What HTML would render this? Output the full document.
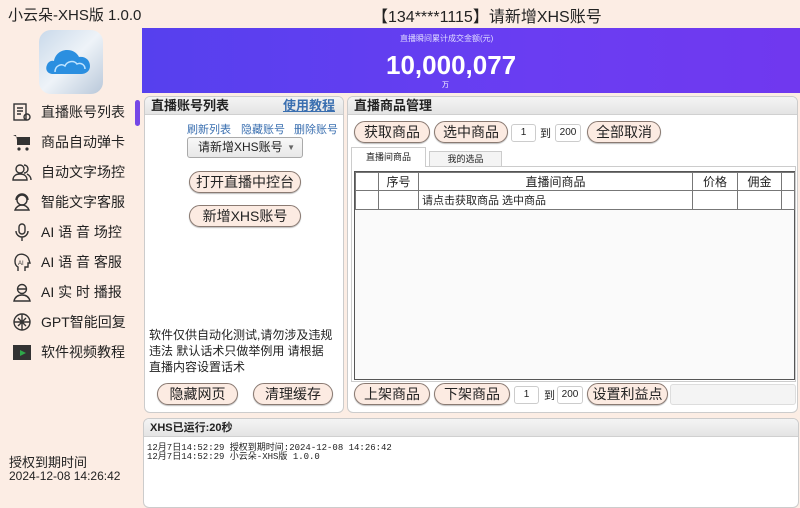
<!DOCTYPE html>
<html><head><meta charset="utf-8"><style>
*{box-sizing:border-box;margin:0;padding:0}
body{width:800px;height:502px;overflow:hidden;background:#fcede4;font-family:"Liberation Sans","Noto Sans CJK SC",sans-serif;color:#222;position:relative}
.a{position:absolute}
.title{left:8px;top:4px;font-size:15px;color:#222}
.menu{left:12px;font-size:14px;color:#222;display:flex;align-items:center}
.menu svg{width:20px;height:20px;margin-right:9px}
.panel{background:#fff;border:1px solid #ccc;border-radius:6px;overflow:hidden}
.ph{height:18px;background:linear-gradient(#f4f4f4,#e4e4e4);border-bottom:1px solid #d0d0d0;font-size:13px;font-weight:bold;padding-left:6px;line-height:18px}
.btn{position:absolute;background:#fcebe2;border:1px solid #8a7a72;border-radius:12px;font-size:14px;text-align:center;color:#222;box-shadow:0 1px 1px #bbb}
.inp{position:absolute;background:#fff;border:1px solid #ccc;border-radius:3px;font-size:10px;text-align:center;line-height:16px;height:18px}
.lnk{font-size:11px;color:#3a6fb0}
td{border:1px solid #777;font-size:12px}
</style></head><body>
<div class="a title">小云朵-XHS版 1.0.0</div>
<div class="a" style="left:372px;top:3px;font-size:16px">【134****1115】请新增XHS账号</div>
<div class="a" style="left:39px;top:30px;width:64px;height:64px;border-radius:12px;background:linear-gradient(135deg,#c9d9ea,#eef3f8 50%,#b9c8da)">
<svg width="64" height="64" viewBox="0 0 64 64"><path d="M14 44c-6 0-8-5-6-9 1-3 4-5 7-4 1-6 6-11 13-11 6 0 10 3 12 7 6-1 11 3 11 9 0 5-4 8-9 8z" fill="#2b8fe0"/><path d="M16 42c0-6 6-9 10-6 2-5 9-6 12-2 4-2 8 1 8 5" stroke="#bfe3ff" stroke-width="1.5" fill="none"/></svg></div>
<div class="a" style="left:135px;top:100px;width:5px;height:26px;background:#7447e6;border-radius:3px"></div>
<div class="a menu" style="top:102px"><svg viewBox="0 0 20 20" fill="none" stroke="#333" stroke-width="1.4"><rect x="2" y="2" width="12" height="16"/><path d="M5 6h6M5 9h6M5 12h4"/><circle cx="15" cy="15" r="3"/></svg>直播账号列表</div>
<div class="a menu" style="top:132px"><svg viewBox="0 0 20 20"><path d="M1 3h3l2 10h11l1-8H5" fill="#333"/><rect x="5" y="5" width="13" height="8" fill="#333"/><circle cx="7" cy="17" r="1.6" fill="#333"/><circle cx="15" cy="17" r="1.6" fill="#333"/></svg>商品自动弹卡</div>
<div class="a menu" style="top:162px"><svg viewBox="0 0 20 20" fill="none" stroke="#333" stroke-width="1.4"><circle cx="8" cy="7" r="4"/><path d="M1 18c0-4 3-6 7-6s7 2 7 6z"/><path d="M12 3a4 4 0 010 8M15 12c2 1 4 3 4 6"/></svg>自动文字场控</div>
<div class="a menu" style="top:192px"><svg viewBox="0 0 20 20" fill="none" stroke="#333" stroke-width="1.4"><circle cx="10" cy="8" r="5"/><path d="M3 18c1-3 4-5 7-5s6 2 7 5zM4 8a6 6 0 0112 0"/></svg>智能文字客服</div>
<div class="a menu" style="top:222px"><svg viewBox="0 0 20 20" fill="none" stroke="#333" stroke-width="1.4"><rect x="7" y="2" width="6" height="10" rx="3"/><path d="M4 9a6 6 0 0012 0M10 15v4"/></svg>AI 语 音 场控</div>
<div class="a menu" style="top:252px"><svg viewBox="0 0 20 20" fill="none" stroke="#333" stroke-width="1.4"><path d="M6 19v-4C2 13 2 6 6 3c4-2 10 0 11 5l1 3h-2v4h-3v4"/><text x="6" y="13" font-size="6" fill="#333" stroke="none">AI</text></svg>AI 语 音 客服</div>
<div class="a menu" style="top:282px"><svg viewBox="0 0 20 20" fill="none" stroke="#333" stroke-width="1.4"><circle cx="10" cy="7" r="4.5"/><path d="M5 7h10M2 19c1-4 4-6 8-6s7 2 8 6z"/></svg>AI 实 时 播报</div>
<div class="a menu" style="top:312px"><svg viewBox="0 0 20 20" fill="none" stroke="#333" stroke-width="1.4"><circle cx="10" cy="10" r="8"/><path d="M6 6l8 8M14 6l-8 8M10 2v16M2 10h16"/></svg>GPT智能回复</div>
<div class="a menu" style="top:342px"><svg viewBox="0 0 20 20"><rect x="1" y="3" width="18" height="15" fill="#333"/><path d="M8 8l6 3-6 3z" fill="#2ea84a"/></svg>软件视频教程</div>
<div class="a" style="left:9px;top:452px;font-size:13px">授权到期时间</div>
<div class="a" style="left:9px;top:469px;font-size:12px">2024-12-08 14:26:42</div>
<div class="a" style="left:142px;top:28px;width:658px;height:65px;background:linear-gradient(90deg,#5640ee,#6a3df2 60%,#7038ef)">
<div class="a" style="left:258px;top:5px;font-size:8px;color:#e0dcff">直播瞬间累计成交金额(元)</div>
<div class="a" style="left:244px;top:22px;font-size:26px;font-weight:bold;color:#fff">10,000,077</div>
<div class="a" style="left:300px;top:52px;font-size:7px;color:#fff">万</div>
</div>
<div class="a panel" style="left:144px;top:96px;width:200px;height:317px">
<div class="ph">直播账号列表<span style="position:absolute;right:8px;color:#3a6fb0;text-decoration:underline">使用教程</span></div>
<div class="a lnk" style="left:42px;top:24px">刷新列表</div>
<div class="a lnk" style="left:96px;top:24px">隐藏账号</div>
<div class="a lnk" style="left:149px;top:24px">删除账号</div>
<div class="a" style="left:42px;top:40px;width:116px;height:21px;border:1px solid #aaa;border-radius:3px;background:linear-gradient(#f8f8f8,#e8e8e8);font-size:12px;padding-left:10px;line-height:19px">请新增XHS账号<span style="position:absolute;right:7px;font-size:8px;color:#666">▼</span></div>
<div class="btn" style="left:44px;top:74px;width:112px;height:22px;line-height:20px">打开直播中控台</div>
<div class="btn" style="left:44px;top:108px;width:112px;height:22px;line-height:20px">新增XHS账号</div>
<div class="a" style="left:4px;top:230px;font-size:12px;line-height:16px;width:186px">软件仅供自动化测试,请勿涉及违规违法 默认话术只做举例用 请根据直播内容设置话术</div>
<div class="btn" style="left:12px;top:286px;width:81px;height:22px;line-height:20px">隐藏网页</div>
<div class="btn" style="left:108px;top:286px;width:80px;height:22px;line-height:20px">清理缓存</div>
</div>
<div class="a panel" style="left:347px;top:96px;width:451px;height:317px">
<div class="ph">直播商品管理</div>
<div class="btn" style="left:6px;top:24px;width:76px;height:22px;line-height:20px">获取商品</div>
<div class="btn" style="left:86px;top:24px;width:74px;height:22px;line-height:20px">选中商品</div>
<div class="inp" style="left:163px;top:27px;width:25px">1</div>
<div class="a" style="left:192px;top:28px;font-size:11px">到</div>
<div class="inp" style="left:207px;top:27px;width:26px">200</div>
<div class="btn" style="left:239px;top:24px;width:74px;height:22px;line-height:20px">全部取消</div>
<div class="a" style="left:3px;top:50px;width:75px;height:20px;border:1px solid #ccc;border-bottom:none;background:#fff;font-size:9px;text-align:center;line-height:18px;z-index:1">直播间商品</div>
<div class="a" style="left:81px;top:54px;width:73px;height:16px;border:1px solid #ccc;background:#f4f4f4;font-size:9px;text-align:center;line-height:15px">我的选品</div>
<div class="a" style="left:3px;top:69px;width:445px;height:216px;border:1px solid #ccc"></div>
<div class="a" style="left:6px;top:74px;width:441px;height:209px;border:1px solid #555;background:#fafafa">
<table style="border-collapse:collapse;width:440px;background:#fff"><tr style="height:18px"><td style="width:23px"></td><td style="width:40px;text-align:center">序号</td><td style="width:274px;text-align:center">直播间商品</td><td style="width:45px;text-align:center">价格</td><td style="width:44px;text-align:center">佣金</td><td></td></tr>
<tr style="height:19px"><td></td><td></td><td style="padding-left:3px;font-size:11px">请点击获取商品 选中商品</td><td></td><td></td><td></td></tr></table></div>
<div class="btn" style="left:6px;top:286px;width:76px;height:22px;line-height:20px">上架商品</div>
<div class="btn" style="left:86px;top:286px;width:76px;height:22px;line-height:20px">下架商品</div>
<div class="inp" style="left:166px;top:289px;width:25px">1</div>
<div class="a" style="left:196px;top:290px;font-size:11px">到</div>
<div class="inp" style="left:209px;top:289px;width:26px">200</div>
<div class="btn" style="left:239px;top:286px;width:81px;height:22px;line-height:20px">设置利益点</div>
<div class="a" style="left:322px;top:287px;width:126px;height:21px;border:1px solid #ddd;border-radius:3px;background:#f4f4f4"></div>
</div>
<div class="a panel" style="left:143px;top:418px;width:656px;height:90px">
<div class="ph" style="font-size:11px">XHS已运行:20秒</div>
<div style="font-family:'Liberation Mono','Noto Sans CJK SC',monospace;font-size:9px;line-height:9px;padding:7px 3px">12月7日14:52:29 授权到期时间:2024-12-08 14:26:42<br>12月7日14:52:29 小云朵-XHS版 1.0.0</div>
</div>
</body></html>
